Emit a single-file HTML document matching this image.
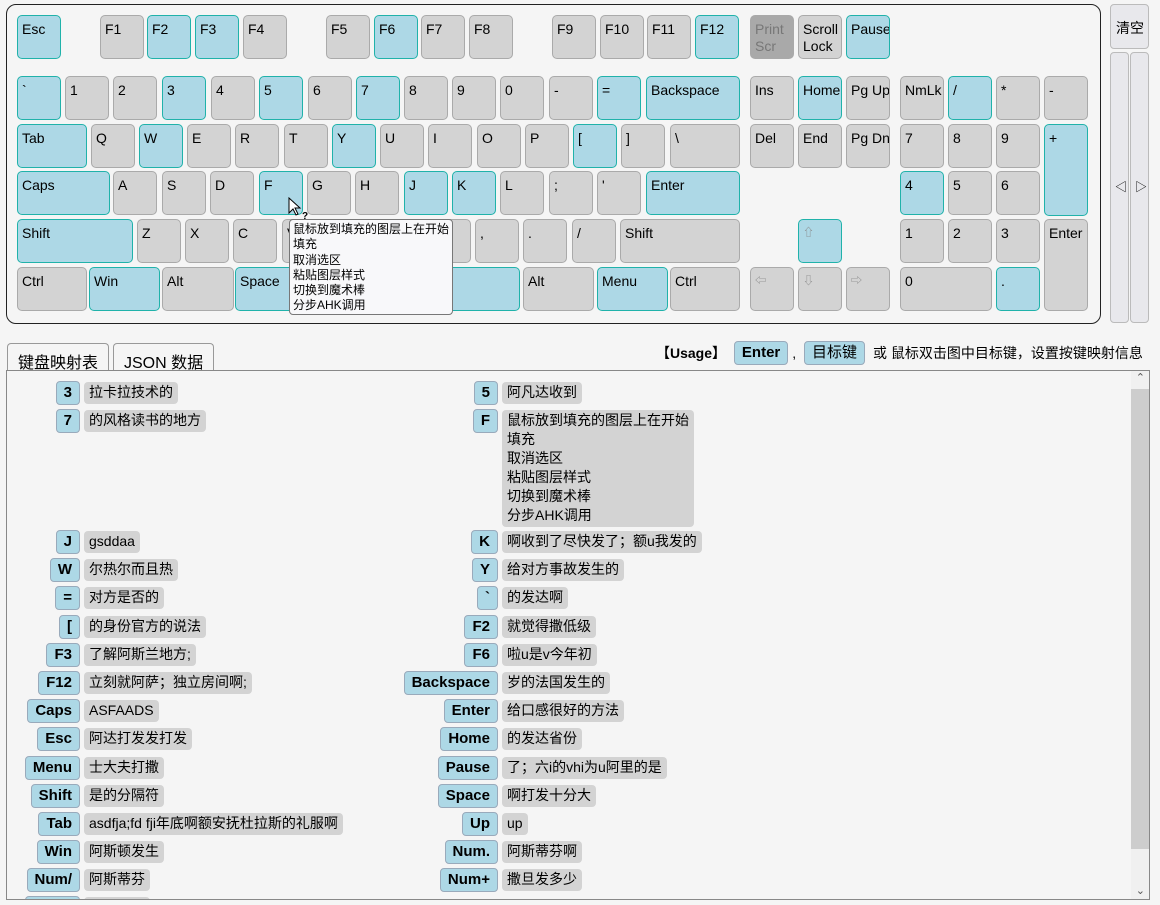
<!DOCTYPE html>
<html><head><meta charset="utf-8"><style>
*{box-sizing:border-box;margin:0;padding:0}
html,body{width:1160px;height:905px;overflow:hidden}
body{background:#f5f5f5;font-family:"Liberation Sans","Noto Sans CJK SC",sans-serif;position:relative;color:#000}
.kb{position:absolute;left:6px;top:4px;width:1095px;height:320px;border:1.5px solid #222;border-radius:10px}
.k{position:absolute;height:44px;width:44px;background:#d3d3d3;border:1px solid #aaa;border-radius:5px;font-size:14px;padding:5px 0 0 4px;line-height:17px;white-space:nowrap;overflow:hidden}
.b{background:#add8e6;border-color:#20b2aa}
.r1{top:15px}.r2{top:76px}.r3{top:124px}.r4{top:171px}.r5{top:219px}.r6{top:267px}
.side{position:absolute;background:#e8e8ec;border:1px solid #bbb;border-radius:4px}
.tip{position:absolute;left:289px;top:219px;width:164px;height:96px;background:#f8f8fa;border:1px solid #777;border-radius:4px;font-size:12px;line-height:15.3px;padding:2px 0 0 3px}
.tab{position:absolute;top:343px;height:28px;border:1px solid #999;border-bottom:none;border-radius:4px 4px 0 0;font-size:16px;padding:5px 0 0 10px;background:#f5f5f5}
.box{position:absolute;left:6px;top:370px;width:1144px;height:530px;border:1px solid #888;overflow:hidden}
.clip{position:absolute;left:0;top:0;width:1130px;height:899px;overflow:hidden}
.row{position:absolute;display:flex;align-items:flex-start}
.kc{text-align:right}
.bd{display:inline-block;background:#add8e6;border:1px solid #9ab;border-radius:4px;font-weight:bold;font-size:15px;height:24px;line-height:22px;padding:0 7px}
.v{display:inline-block;background:#d3d3d3;border-radius:4px;font-size:14px;line-height:19px;padding:1px 5px 2px 5px;margin-left:4px;margin-top:1px}
.L .kc{width:80px}.R .kc{width:498px}
</style></head><body>
<div class="kb"></div>
<!-- row1 -->
<div class="k b r1" style="left:17px">Esc</div>
<div class="k r1" style="left:100px">F1</div>
<div class="k b r1" style="left:147px">F2</div>
<div class="k b r1" style="left:195px">F3</div>
<div class="k r1" style="left:243px">F4</div>
<div class="k r1" style="left:326px">F5</div>
<div class="k b r1" style="left:374px">F6</div>
<div class="k r1" style="left:421px">F7</div>
<div class="k r1" style="left:469px">F8</div>
<div class="k r1" style="left:552px">F9</div>
<div class="k r1" style="left:600px">F10</div>
<div class="k r1" style="left:647px">F11</div>
<div class="k b r1" style="left:695px">F12</div>
<div class="k r1" style="left:750px;background:#a9a9a9;color:#777;border-color:#a9a9a9">Print<br>Scr</div>
<div class="k r1" style="left:798px">Scroll<br>Lock</div>
<div class="k b r1" style="left:846px">Pause</div>
<!-- row2 -->
<div class="k b r2" style="left:17px">`</div>
<div class="k r2" style="left:65px">1</div>
<div class="k r2" style="left:113px">2</div>
<div class="k b r2" style="left:162px">3</div>
<div class="k r2" style="left:211px">4</div>
<div class="k b r2" style="left:259px">5</div>
<div class="k r2" style="left:308px">6</div>
<div class="k b r2" style="left:356px">7</div>
<div class="k r2" style="left:404px">8</div>
<div class="k r2" style="left:452px">9</div>
<div class="k r2" style="left:500px">0</div>
<div class="k r2" style="left:549px">-</div>
<div class="k b r2" style="left:597px">=</div>
<div class="k b r2" style="left:646px;width:94px">Backspace</div>
<div class="k r2" style="left:750px">Ins</div>
<div class="k b r2" style="left:798px">Home</div>
<div class="k r2" style="left:846px">Pg Up</div>
<div class="k r2" style="left:900px">NmLk</div>
<div class="k b r2" style="left:948px">/</div>
<div class="k r2" style="left:996px">*</div>
<div class="k r2" style="left:1044px">-</div>
<!-- row3 -->
<div class="k b r3" style="left:17px;width:70px">Tab</div>
<div class="k r3" style="left:91px">Q</div>
<div class="k b r3" style="left:139px">W</div>
<div class="k r3" style="left:187px">E</div>
<div class="k r3" style="left:235px">R</div>
<div class="k r3" style="left:284px">T</div>
<div class="k b r3" style="left:332px">Y</div>
<div class="k r3" style="left:380px">U</div>
<div class="k r3" style="left:428px">I</div>
<div class="k r3" style="left:477px">O</div>
<div class="k r3" style="left:525px">P</div>
<div class="k b r3" style="left:573px">[</div>
<div class="k r3" style="left:621px">]</div>
<div class="k r3" style="left:670px;width:70px">\</div>
<div class="k r3" style="left:750px">Del</div>
<div class="k r3" style="left:798px">End</div>
<div class="k r3" style="left:846px">Pg Dn</div>
<div class="k r3" style="left:900px">7</div>
<div class="k r3" style="left:948px">8</div>
<div class="k r3" style="left:996px">9</div>
<div class="k b r3" style="left:1044px;height:92px">+</div>
<!-- row4 -->
<div class="k b r4" style="left:17px;width:93px">Caps</div>
<div class="k r4" style="left:113px">A</div>
<div class="k r4" style="left:162px">S</div>
<div class="k r4" style="left:210px">D</div>
<div class="k b r4" style="left:259px">F</div>
<div class="k r4" style="left:307px">G</div>
<div class="k r4" style="left:355px">H</div>
<div class="k b r4" style="left:404px">J</div>
<div class="k b r4" style="left:452px">K</div>
<div class="k r4" style="left:500px">L</div>
<div class="k r4" style="left:549px">;</div>
<div class="k r4" style="left:597px">'</div>
<div class="k b r4" style="left:646px;width:94px">Enter</div>
<div class="k b r4" style="left:900px">4</div>
<div class="k r4" style="left:948px">5</div>
<div class="k r4" style="left:996px">6</div>
<!-- row5 -->
<div class="k b r5" style="left:17px;width:116px">Shift</div>
<div class="k r5" style="left:137px">Z</div>
<div class="k r5" style="left:185px">X</div>
<div class="k r5" style="left:233px">C</div>
<div class="k r5" style="left:282px">V</div>
<div class="k r5" style="left:330px">B</div>
<div class="k r5" style="left:378px">N</div>
<div class="k r5" style="left:427px">M</div>
<div class="k r5" style="left:475px">,</div>
<div class="k r5" style="left:523px">.</div>
<div class="k r5" style="left:572px">/</div>
<div class="k r5" style="left:620px;width:120px">Shift</div>
<div class="k b r5" style="left:798px;font-size:11px;color:#888">⇧</div>
<div class="k r5" style="left:900px">1</div>
<div class="k r5" style="left:948px">2</div>
<div class="k r5" style="left:996px">3</div>
<div class="k r5" style="left:1044px;height:92px">Enter</div>
<!-- row6 -->
<div class="k r6" style="left:17px;width:70px">Ctrl</div>
<div class="k b r6" style="left:89px;width:71px">Win</div>
<div class="k r6" style="left:162px;width:72px">Alt</div>
<div class="k b r6" style="left:235px;width:285px">Space</div>
<div class="k r6" style="left:523px;width:71px">Alt</div>
<div class="k b r6" style="left:597px;width:71px">Menu</div>
<div class="k r6" style="left:670px;width:70px">Ctrl</div>
<div class="k r6" style="left:750px;font-size:11px;color:#888">⇦</div>
<div class="k r6" style="left:798px;font-size:11px;color:#888">⇩</div>
<div class="k r6" style="left:846px;font-size:11px;color:#888">⇨</div>
<div class="k r6" style="left:900px;width:92px">0</div>
<div class="k b r6" style="left:996px">.</div>
<!-- cursor -->
<svg style="position:absolute;left:288px;top:197px" width="24" height="24" viewBox="0 0 24 24"><path d="M1 1 L1 16 L5 12 L8 18 L10 17 L7 11 L12 11 Z" fill="#fff" stroke="#000" stroke-width="1"/><text x="14" y="22" font-size="10" font-family="Liberation Sans" font-weight="bold">?</text></svg>
<div class="tip">鼠标放到填充的图层上在开始<br>填充<br>取消选区<br>粘贴图层样式<br>切换到魔术棒<br>分步AHK调用</div>
<!-- side -->
<div class="side" style="left:1110px;top:4px;width:39px;height:45px;font-size:14px;padding:13px 0 0 5px">清空</div>
<div class="side" style="left:1110px;top:52px;width:19px;height:271px;font-size:12px;padding:125px 0 0 4px">◁</div>
<div class="side" style="left:1130px;top:52px;width:19px;height:271px;font-size:12px;padding:125px 0 0 4px">▷</div>
<!-- tabs -->
<div class="tab" style="left:7px;width:102px">键盘映射表</div>
<div class="tab" style="left:113px;width:101px">JSON 数据</div>
<div style="position:absolute;left:656px;top:341px;font-size:14px;display:flex;align-items:center;white-space:nowrap">
<b>【Usage】</b>&nbsp;<span class="bd" style="margin:0 4px">Enter</span>,&nbsp;<span class="bd" style="margin:0 4px;font-weight:normal">目标键</span>&nbsp;或 鼠标双击图中目标键，设置按键映射信息</div>
<div class="box">
<div style="position:absolute;right:0;top:0;width:18px;height:530px;background:#f0f0f0"></div>
<div style="position:absolute;right:0;top:18px;width:18px;height:460px;background:#cdcdcd"></div>
<div style="position:absolute;right:4px;top:0;font-size:11px;color:#555">⌃</div>
<div style="position:absolute;right:4px;bottom:2px;font-size:11px;color:#555">⌄</div>
</div>
<div class="clip">
<!-- list left -->
<div class="row L" style="top:381px;left:0"><div class="kc"><span class="bd">3</span></div><span class="v">拉卡拉技术的</span></div>
<div class="row L" style="top:409px;left:0"><div class="kc"><span class="bd">7</span></div><span class="v">的风格读书的地方</span></div>
<div class="row L" style="top:530px;left:0"><div class="kc"><span class="bd">J</span></div><span class="v">gsddaa</span></div>
<div class="row L" style="top:558px;left:0"><div class="kc"><span class="bd">W</span></div><span class="v">尔热尔而且热</span></div>
<div class="row L" style="top:586px;left:0"><div class="kc"><span class="bd">=</span></div><span class="v">对方是否的</span></div>
<div class="row L" style="top:615px;left:0"><div class="kc"><span class="bd">[</span></div><span class="v">的身份官方的说法</span></div>
<div class="row L" style="top:643px;left:0"><div class="kc"><span class="bd">F3</span></div><span class="v">了解阿斯兰地方;</span></div>
<div class="row L" style="top:671px;left:0"><div class="kc"><span class="bd">F12</span></div><span class="v">立刻就阿萨；独立房间啊;</span></div>
<div class="row L" style="top:699px;left:0"><div class="kc"><span class="bd">Caps</span></div><span class="v">ASFAADS</span></div>
<div class="row L" style="top:727px;left:0"><div class="kc"><span class="bd">Esc</span></div><span class="v">阿达打发发打发</span></div>
<div class="row L" style="top:756px;left:0"><div class="kc"><span class="bd">Menu</span></div><span class="v">士大夫打撒</span></div>
<div class="row L" style="top:784px;left:0"><div class="kc"><span class="bd">Shift</span></div><span class="v">是的分隔符</span></div>
<div class="row L" style="top:812px;left:0"><div class="kc"><span class="bd">Tab</span></div><span class="v">asdfja;fd fji年底啊额安抚杜拉斯的礼服啊</span></div>
<div class="row L" style="top:840px;left:0"><div class="kc"><span class="bd">Win</span></div><span class="v">阿斯顿发生</span></div>
<div class="row L" style="top:868px;left:0"><div class="kc"><span class="bd">Num/</span></div><span class="v">阿斯蒂芬</span></div>
<div class="row L" style="top:896px;left:0"><div class="kc"><span class="bd">Num*</span></div><span class="v">阿斯蒂芬</span></div>
<!-- list right -->
<div class="row R" style="top:381px;left:0"><div class="kc"><span class="bd">5</span></div><span class="v">阿凡达收到</span></div>
<div class="row R" style="top:409px;left:0"><div class="kc"><span class="bd">F</span></div><span class="v">鼠标放到填充的图层上在开始<br>填充<br>取消选区<br>粘贴图层样式<br>切换到魔术棒<br>分步AHK调用</span></div>
<div class="row R" style="top:530px;left:0"><div class="kc"><span class="bd">K</span></div><span class="v">啊收到了尽快发了；额u我发的</span></div>
<div class="row R" style="top:558px;left:0"><div class="kc"><span class="bd">Y</span></div><span class="v">给对方事故发生的</span></div>
<div class="row R" style="top:586px;left:0"><div class="kc"><span class="bd">`</span></div><span class="v">的发达啊</span></div>
<div class="row R" style="top:615px;left:0"><div class="kc"><span class="bd">F2</span></div><span class="v">就觉得撒低级</span></div>
<div class="row R" style="top:643px;left:0"><div class="kc"><span class="bd">F6</span></div><span class="v">啦u是v今年初</span></div>
<div class="row R" style="top:671px;left:0"><div class="kc"><span class="bd">Backspace</span></div><span class="v">岁的法国发生的</span></div>
<div class="row R" style="top:699px;left:0"><div class="kc"><span class="bd">Enter</span></div><span class="v">给口感很好的方法</span></div>
<div class="row R" style="top:727px;left:0"><div class="kc"><span class="bd">Home</span></div><span class="v">的发达省份</span></div>
<div class="row R" style="top:756px;left:0"><div class="kc"><span class="bd">Pause</span></div><span class="v">了；六i的vhi为u阿里的是</span></div>
<div class="row R" style="top:784px;left:0"><div class="kc"><span class="bd">Space</span></div><span class="v">啊打发十分大</span></div>
<div class="row R" style="top:812px;left:0"><div class="kc"><span class="bd">Up</span></div><span class="v">up</span></div>
<div class="row R" style="top:840px;left:0"><div class="kc"><span class="bd">Num.</span></div><span class="v">阿斯蒂芬啊</span></div>
<div class="row R" style="top:868px;left:0"><div class="kc"><span class="bd">Num+</span></div><span class="v">撒旦发多少</span></div>
</div>
</body></html>
